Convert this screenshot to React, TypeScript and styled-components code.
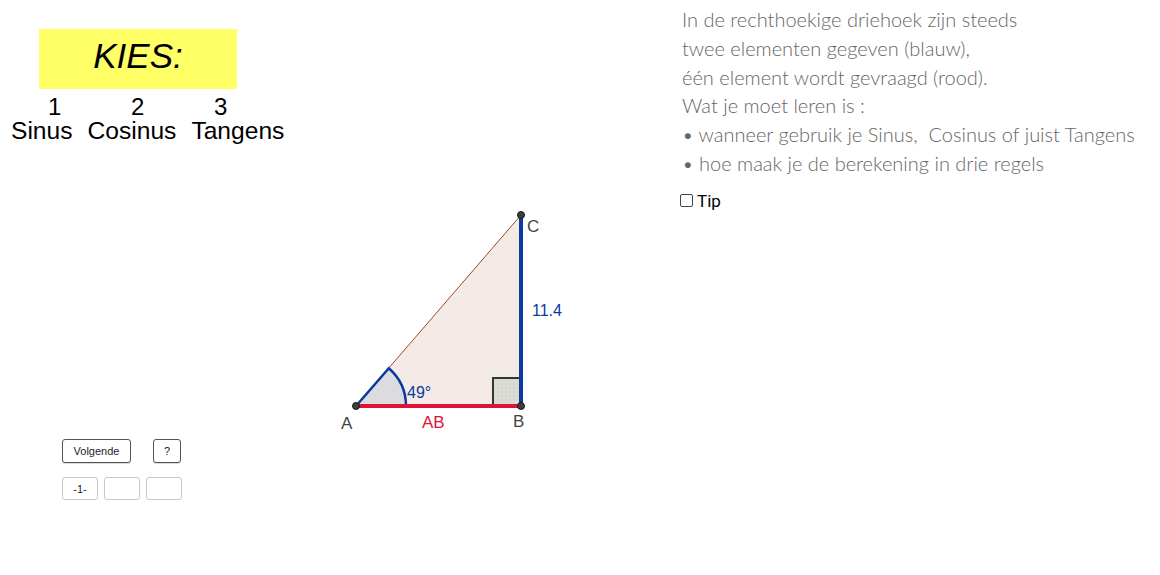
import React from 'react'
import styled, { createGlobalStyle } from 'styled-components'

const GlobalStyle = createGlobalStyle`
	html, body {
		margin: 0;
		padding: 0;
		background: #ffffff;
	}

	body {
		font-family: "Liberation Sans", Arial, sans-serif;
	}
`

const Page = styled.div`
	display: grid;
	grid-template-columns: 330px 260px 1fr;
	width: 1160px;
	height: 575px;
	overflow: hidden;
	background: #ffffff;
`

const LeftPanel = styled.div`
	display: flex;
	flex-direction: column;
`

const KiesBox = styled.div`
	width: 198px;
	height: 60px;
	box-sizing: border-box;
	margin: 29px 0 0 39px;
	padding-bottom: 6px;
	background: #ffff66;
	display: flex;
	align-items: center;
	justify-content: center;
	font-size: 35px;
	font-style: italic;
	color: #000000;
`

const NumberRow = styled.div`
	display: flex;
	margin-top: 6px;
	padding-left: 48px;
	font-size: 24px;
	line-height: 24px;
`

const Number = styled.span`
	width: 83px;
`

const NameRow = styled.div`
	display: flex;
	gap: 15px;
	padding-left: 11px;
	font-size: 24.6px;
	line-height: 24px;
`

const ButtonRow = styled.div<{ $top: number }>`
	display: flex;
	gap: 6px;
	margin-top: ${p => p.$top}px;
	padding-left: 62px;
`

const Button = styled.button<{ $width: number; $faded?: boolean; $spaceBefore?: number }>`
	width: ${p => p.$width}px;
	height: ${p => (p.$faded ? 23 : 24)}px;
	margin-left: ${p => p.$spaceBefore ?? 0}px;
	padding: 0;
	background: #ffffff;
	border: 1px solid ${p => (p.$faded ? '#c8c8c8' : '#555555')};
	border-radius: 3px;
	font-family: "Liberation Sans", Arial, sans-serif;
	font-size: 11px;
	color: #222222;
	box-shadow: ${p => (p.$faded ? 'none' : '0 1px 0 rgba(0,0,0,0.15)')};
`

const FigureColumn = styled.div`
	padding-top: 200px;
`

const InfoPanel = styled.div`
	padding: 5px 0 0 92px;
`

const InfoLine = styled.div`
	font-family: Lato, "Open Sans", sans-serif;
	font-size: 20px;
	font-weight: 300;
	line-height: 28.8px;
	color: #666666;
	white-space: pre;
`

const TipLabel = styled.label`
	display: flex;
	align-items: center;
	gap: 4px;
	margin: 13px 0 0 -2px;
	font-family: Roboto, "Liberation Sans", sans-serif;
	font-size: 17px;
	color: #000000;
`

const TipBox = styled.span`
	width: 11px;
	height: 11px;
	border: 1px solid #444444;
	border-radius: 2px;
	background: #ffffff;
`

function Triangle() {
	// origin of this drawing sits at (330, 200) on the page
	const A = { x: 26, y: 206 }
	const B = { x: 191, y: 206 }
	const C = { x: 191, y: 15 }
	const r = 50
	const rad = (49 * Math.PI) / 180
	const arcEnd = { x: A.x + r * Math.cos(rad), y: A.y - r * Math.sin(rad) }

	return (
		<svg width="260" height="240" viewBox="0 0 260 240">
			<defs>
				<pattern id="dots" width="4" height="4" patternUnits="userSpaceOnUse">
					<rect width="4" height="4" fill="#d8d9d3" />
					<circle cx="2" cy="2" r="0.6" fill="#f4f4f0" />
				</pattern>
			</defs>
			<polygon points={`${A.x},${A.y} ${B.x},${B.y} ${C.x},${C.y}`} fill="#f4ebe6" />
			<line x1={A.x} y1={A.y} x2={C.x} y2={C.y} stroke="#a0481e" strokeWidth="1" />
			<path
				d={`M ${A.x} ${A.y} L ${A.x + r} ${A.y} A ${r} ${r} 0 0 0 ${arcEnd.x} ${arcEnd.y} Z`}
				fill="#dcdce0"
			/>
			<path
				d={`M ${A.x + r} ${A.y} A ${r} ${r} 0 0 0 ${arcEnd.x} ${arcEnd.y} L ${A.x} ${A.y}`}
				fill="none"
				stroke="#0a3aa0"
				strokeWidth="2.5"
			/>
			<rect x={B.x - 28} y={B.y - 28} width="28" height="28" fill="url(#dots)" stroke="#2f3a30" strokeWidth="2" />
			<line x1={A.x} y1={A.y} x2={B.x} y2={B.y} stroke="#dc143c" strokeWidth="4" />
			<line x1={B.x} y1={B.y} x2={C.x} y2={C.y} stroke="#0a3aa0" strokeWidth="4" />
			{[A, B, C].map((p, i) => (
				<circle key={i} cx={p.x} cy={p.y} r="3.5" fill="#3b3f3b" stroke="#1a1a1a" strokeWidth="1" />
			))}
			<g fontFamily="Liberation Sans, Arial, sans-serif" fontSize="17">
				<text x="11" y="229" fill="#444444">A</text>
				<text x="92" y="228" fill="#dc143c">AB</text>
				<text x="183" y="227" fill="#444444">B</text>
				<text x="197" y="32" fill="#444444">C</text>
				<text x="202" y="116" fill="#0a3aa0" fontSize="16">11.4</text>
				<text x="77" y="198" fill="#0a3aa0" fontSize="16">49°</text>
			</g>
		</svg>
	)
}

export default function App() {
	const info = [
		'In de rechthoekige driehoek zijn steeds',
		'twee elementen gegeven (blauw),',
		'één element wordt gevraagd (rood).',
		'Wat je moet leren is :',
		'• wanneer gebruik je Sinus,  Cosinus of juist Tangens',
		'• hoe maak je de berekening in drie regels',
	]

	return (
		<>
			<GlobalStyle />
			<Page>
				<LeftPanel>
					<KiesBox>KIES:</KiesBox>
					<NumberRow>
						<Number>1</Number>
						<Number>2</Number>
						<Number>3</Number>
					</NumberRow>
					<NameRow>
						<span>Sinus</span>
						<span>Cosinus</span>
						<span>Tangens</span>
					</NameRow>
					<ButtonRow $top={296}>
						<Button $width={69}>Volgende</Button>
						<Button $width={28} $spaceBefore={16}>?</Button>
					</ButtonRow>
					<ButtonRow $top={14}>
						<Button $width={36} $faded>-1-</Button>
						<Button $width={36} $faded />
						<Button $width={36} $faded />
					</ButtonRow>
				</LeftPanel>
				<FigureColumn>
					<Triangle />
				</FigureColumn>
				<InfoPanel>
					{info.map(line => (
						<InfoLine key={line}>{line}</InfoLine>
					))}
					<TipLabel>
						<TipBox />
						Tip
					</TipLabel>
				</InfoPanel>
			</Page>
		</>
	)
}
